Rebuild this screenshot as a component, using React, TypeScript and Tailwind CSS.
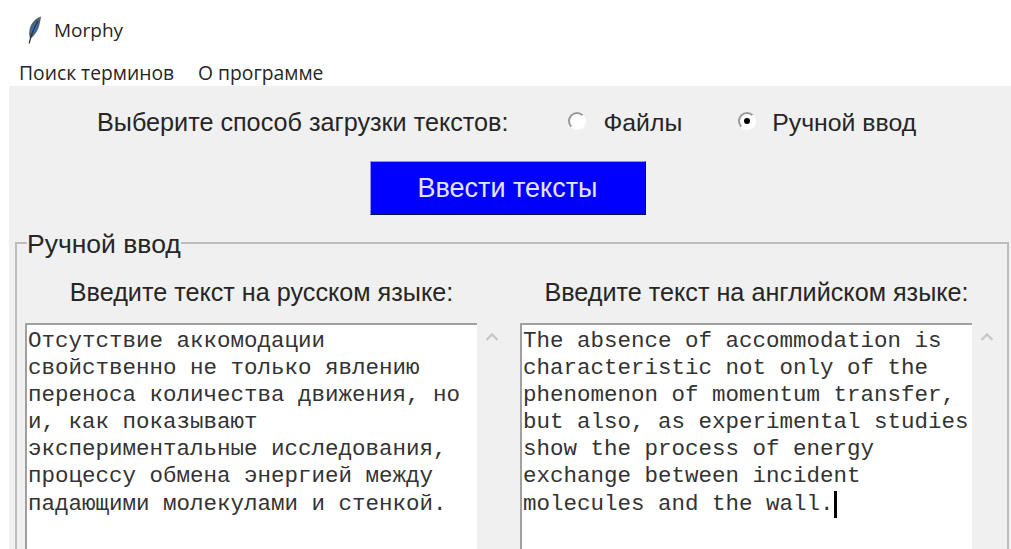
const russian = [
  "Отсутствие аккомодации",
  "свойственно не только явлению",
  "переноса количества движения, но",
  "и, как показывают",
  "экспериментальные исследования,",
  "процессу обмена энергией между",
  "падающими молекулами и стенкой.",
];

const english = [
  "The absence of accommodation is",
  "characteristic not only of the",
  "phenomenon of momentum transfer,",
  "but also, as experimental studies",
  "show the process of energy",
  "exchange between incident",
  "molecules and the wall.",
];

function Feather() {
  return (
    <svg width="20" height="28" viewBox="0 0 20 28">
      <path d="M17 0.5 C12 2 7.5 6.5 5.8 12.5 C4.8 16.5 5 20 6.2 22.5 L7.5 22 C11.5 18.5 14.5 13.5 15.5 8.5 C16.2 5.5 16.8 3 17 0.5 Z" fill="#55606c" />
      <path d="M14.5 4.5 C11 7 8 11 7.2 15.5 C7 17 7.2 18 7.6 19 C10.5 16 13 12 14 8 Z" fill="#2f7ad6" />
      <path d="M14 5 C10.5 11 7 18 5.2 27.5" stroke="#2a2f38" strokeWidth="1.3" fill="none" />
    </svg>
  );
}

function Radio({ checked }: { checked?: boolean }) {
  return (
    <span className="relative block h-[18px] w-[18px] rounded-full border-[2px] border-t-[#9a9a9a] border-l-[#9a9a9a] border-r-white border-b-white bg-white">
      {checked && <span className="absolute left-[4px] top-[4px] h-[6px] w-[6px] rounded-full bg-black" />}
    </span>
  );
}

function TextPane({ heading, lines, caret }: { heading: string; lines: string[]; caret?: boolean }) {
  return (
    <div className="flex flex-col">
      <div className="mt-[29px] w-[473px] text-center text-[25.2px] leading-[40px]">
        {heading}
      </div>
      <div className="mt-[11px] flex">
        <div className="h-[240px] w-[452px] border-t-[2px] border-l-[2px] border-t-[#a0a0a0] border-l-[#a0a0a0] bg-white pl-[1px] pt-[3px] font-['Liberation_Mono',monospace] text-[22.5px] leading-[27.1px] text-[#333]">
          {lines.map((line, i) => (
            <div key={i} className="whitespace-pre">
              {line}
              {caret && i === lines.length - 1 && (
                <span className="inline-block h-[27px] w-[3px] bg-black align-top" />
              )}
            </div>
          ))}
        </div>
        <div className="flex w-[30px] justify-center pt-[9px]">
          <svg width="14" height="10" viewBox="0 0 14 10">
            <path d="M1.5 8 L7 2.5 L12.5 8" stroke="#c8c8c8" strokeWidth="2.4" fill="none" />
          </svg>
        </div>
      </div>
    </div>
  );
}

export default function App() {
  return (
    <div className="flex h-[549px] w-[1011px] flex-col overflow-hidden bg-white text-[#262626]">
      <div className="flex h-[60px] shrink-0 items-center pl-[24px]">
        <Feather />
        <span className="ml-[10px] font-['Open_Sans',sans-serif] text-[19px]">Morphy</span>
      </div>
      <div className="flex h-[26px] shrink-0 items-center gap-[24px] pl-[19px] font-['Open_Sans',sans-serif] text-[19.3px] font-medium">
        <span>Поиск терминов</span>
        <span>О программе</span>
      </div>
      <div className="ml-[9px] flex-1 bg-[#f0f0f0] pl-[6px] pr-[2px] font-['Liberation_Sans',sans-serif] text-[25.2px]">
        <div className="flex h-[73px] items-center pl-[82px]">
          <span>Выберите способ загрузки текстов:</span>
          <span className="ml-[60px] -mt-[4px]"><Radio /></span>
          <span className="ml-[17px] text-[24.8px]">Файлы</span>
          <span className="ml-[56px] -mt-[4px]"><Radio checked /></span>
          <span className="ml-[16px] text-[24.8px]">Ручной ввод</span>
        </div>
        <div className="mt-[2px] flex justify-center pr-[9px]">
          <button className="h-[54px] w-[276px] border border-t-[#8f8fff] border-l-[#8f8fff] border-r-[#10104a] border-b-[#10104a] bg-[#0000ff] text-[27px] text-[#e4e4ff]">
            Ввести тексты
          </button>
        </div>
        <fieldset className="mt-[12px] h-[400px] border-[2px] border-[#bdbdbd] pl-[8px]">
          <legend className="ml-[2px] pt-[2px] text-[26.5px] leading-[30px]">Ручной ввод</legend>
          <div className="-mt-[16px] grid grid-cols-[495px_1fr]">
            <TextPane heading="Введите текст на русском языке:" lines={russian} />
            <TextPane heading="Введите текст на английском языке:" lines={english} caret />
          </div>
        </fieldset>
      </div>
    </div>
  );
}
